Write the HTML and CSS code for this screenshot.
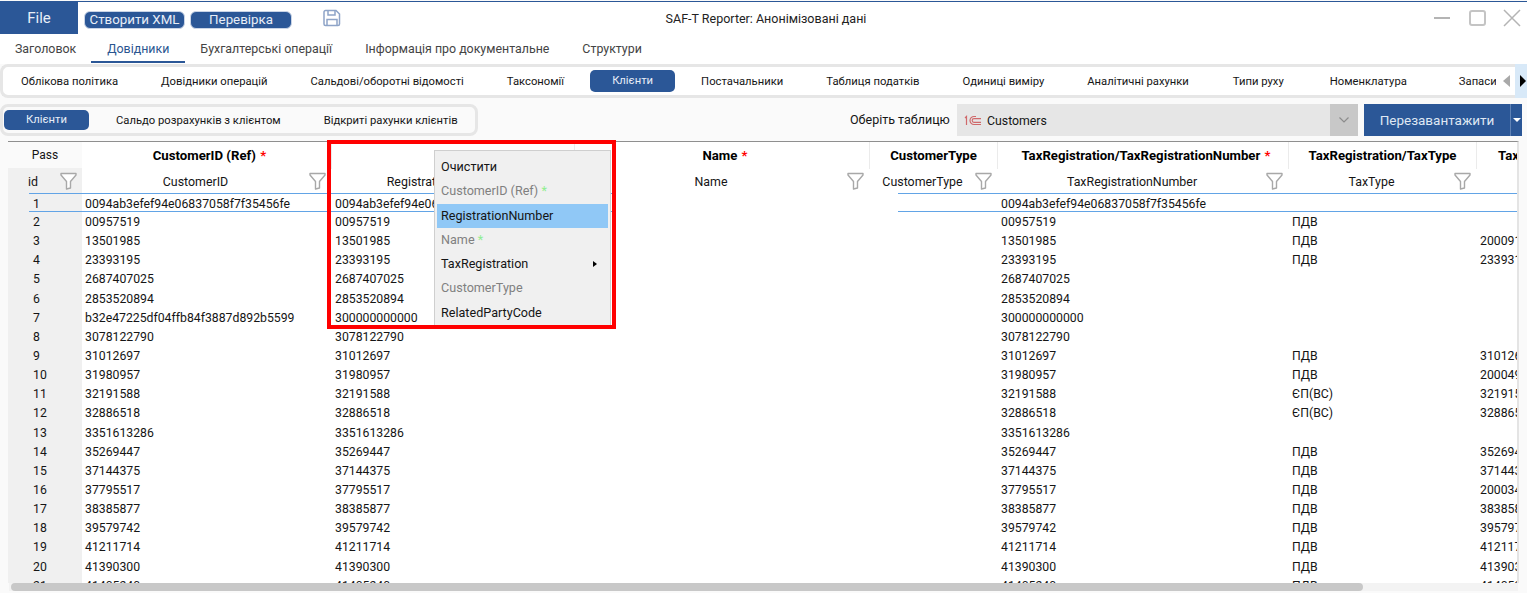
FILE: index.html
```html
<!DOCTYPE html>
<html lang="uk">
<head>
    <meta charset="UTF-8">
    <meta name="viewport" content="width=device-width, initial-scale=1.0">
    <title>SAF-T Reporter</title>
    <link rel="stylesheet" href="styles.css">
</head>
<body>
    <svg class="svg-defs" width="0" height="0">
        <symbol id="funnel" viewBox="0 0 17 18">
            <path d="M1 1.500h15v1.500L10.500 9.500V16L6.500 17V9.500L1 3z" fill="#fff" stroke="#a8a8a8" stroke-width="1.400" stroke-linejoin="round"/>
        </symbol>
    </svg>

    <div class="app">
        <header class="titlebar">
            <div class="titlebar-left">
                <button class="file-btn">File</button>
                <button class="pill-btn pill-xml">Створити XML</button>
                <button class="pill-btn pill-check">Перевірка</button>
                <svg class="save-icon" width="18" height="18" viewBox="0 0 18 18" fill="none" stroke="#8ea4c8" stroke-width="1.500">
                    <path d="M2.500 1.500h10.500l3.500 3.500v10a1.500 1.500 0 0 1-1.500 1.500H2.500a1.500 1.500 0 0 1-1.500-1.500V3a1.500 1.500 0 0 1 1.500-1.500z"/>
                    <path d="M5 1.500v4.500h7V1.500M4 16.500v-6h10v6"/>
                </svg>
            </div>
            <div class="title">SAF-T Reporter: Анонімізовані дані</div>
            <div class="win-controls">
                <span class="win-min"></span>
                <span class="win-max"></span>
                <svg class="win-close" width="20" height="20" viewBox="0 0 20 20" stroke="#b4b4b4" stroke-width="1.500">
                    <path d="M2 2l16 16M18 2L2 18"/>
                </svg>
            </div>
        </header>

        <nav class="main-tabs">
            <a class="main-tab">Заголовок</a>
            <a class="main-tab active">Довідники</a>
            <a class="main-tab">Бухгалтерські операції</a>
            <a class="main-tab">Інформація про документальне</a>
            <a class="main-tab">Структури</a>
        </nav>

        <div class="sub-tabs">
            <div class="sub-tabs-list">
                <a class="sub-tab">Облікова політика</a>
                <a class="sub-tab">Довідники операцій</a>
                <a class="sub-tab">Сальдові/оборотні відомості</a>
                <a class="sub-tab">Таксономії</a>
                <a class="sub-tab active">Клієнти</a>
                <a class="sub-tab">Постачальники</a>
                <a class="sub-tab">Таблиця податків</a>
                <a class="sub-tab">Одиниці виміру</a>
                <a class="sub-tab">Аналітичні рахунки</a>
                <a class="sub-tab tab-moves">Типи руху</a>
                <a class="sub-tab tab-items">Номенклатура</a>
                <a class="sub-tab tab-stock">Запаси</a>
            </div>
            <span class="arrow-left"></span>
            <span class="arrow-right-box"><span class="arrow-right"></span></span>
        </div>

        <div class="toolbar">
            <div class="toggle-group">
                <a class="toggle active">Клієнти</a>
                <a class="toggle">Сальдо розрахунків з клієнтом</a>
                <a class="toggle">Відкриті рахунки клієнтів</a>
            </div>
            <label class="table-label">Оберіть таблицю</label>
            <div class="combo">
                <svg class="combo-icon" width="18" height="11" viewBox="0 0 18 11" fill="none" stroke="#d0696b" stroke-width="1.200">
                    <path d="M1 3l1.500-1.500V10"/>
                    <path d="M17 9.500H10a4 4 0 0 1 0-8h2M17 7.300h-7a1.800 1.800 0 0 1 0-3.600h7"/>
                </svg>
                <span class="combo-text">Customers</span>
                <span class="combo-arrow">
                    <svg width="10" height="6" viewBox="0 0 10 6" fill="none" stroke="#8c8c8c" stroke-width="1.200"><path d="M.5.500L5 5 9.500.500"/></svg>
                </span>
            </div>
            <div class="reload">
                <span class="reload-text">Перезавантажити</span>
                <span class="reload-drop"><span class="tri-down"></span></span>
            </div>
        </div>

        <div class="grid-wrap">
            <div class="grid-row head-top">
                <div class="pass">Pass</div>
                <div class="h-cell h-req">CustomerID (Ref) <i>*</i></div>
                <div class="h-cell"></div>
                <div class="h-cell h-req">Name <i>*</i></div>
                <div class="h-cell">CustomerType</div>
                <div class="h-cell h-req">TaxRegistration/TaxRegistrationNumber <i>*</i></div>
                <div class="h-cell">TaxRegistration/TaxType</div>
                <div class="h-cell h-last">TaxRegistration/TaxNumber</div>
            </div>
            <div class="grid-row head-sub">
                <div class="sub-id"><span>id</span><svg class="funnel"><use href="#funnel"/></svg></div>
                <div class="sub-cell"><span>CustomerID</span><svg class="funnel"><use href="#funnel"/></svg></div>
                <div class="sub-cell"><span>RegistrationNumber</span><svg class="funnel"><use href="#funnel"/></svg></div>
                <div class="sub-cell"><span>Name</span><svg class="funnel"><use href="#funnel"/></svg></div>
                <div class="sub-cell"><span>CustomerType</span><svg class="funnel"><use href="#funnel"/></svg></div>
                <div class="sub-cell"><span>TaxRegistrationNumber</span><svg class="funnel"><use href="#funnel"/></svg></div>
                <div class="sub-cell"><span>TaxType</span><svg class="funnel"><use href="#funnel"/></svg></div>
                <div class="sub-cell"></div>
            </div>

            <div class="rows">
                <div class="grid-row row row-first"><div class="id">1</div><div>0094ab3efef94e06837058f7f35456fe</div><div class="reg">0094ab3efef94e06837058f7f35456fe</div><div></div><div></div><div>0094ab3efef94e06837058f7f35456fe</div><div></div><div></div></div>
                <div class="grid-row row"><div class="id">2</div><div>00957519</div><div class="reg">00957519</div><div></div><div></div><div>00957519</div><div>ПДВ</div><div></div></div>
                <div class="grid-row row"><div class="id">3</div><div>13501985</div><div class="reg">13501985</div><div></div><div></div><div>13501985</div><div>ПДВ</div><div>200091985</div></div>
                <div class="grid-row row"><div class="id">4</div><div>23393195</div><div class="reg">23393195</div><div></div><div></div><div>23393195</div><div>ПДВ</div><div>233931950</div></div>
                <div class="grid-row row"><div class="id">5</div><div>2687407025</div><div class="reg">2687407025</div><div></div><div></div><div>2687407025</div><div></div><div></div></div>
                <div class="grid-row row"><div class="id">6</div><div>2853520894</div><div class="reg">2853520894</div><div></div><div></div><div>2853520894</div><div></div><div></div></div>
                <div class="grid-row row"><div class="id">7</div><div>b32e47225df04ffb84f3887d892b5599</div><div class="reg">300000000000</div><div></div><div></div><div>300000000000</div><div></div><div></div></div>
                <div class="grid-row row"><div class="id">8</div><div>3078122790</div><div class="reg">3078122790</div><div></div><div></div><div>3078122790</div><div></div><div></div></div>
                <div class="grid-row row"><div class="id">9</div><div>31012697</div><div class="reg">31012697</div><div></div><div></div><div>31012697</div><div>ПДВ</div><div>310126926</div></div>
                <div class="grid-row row"><div class="id">10</div><div>31980957</div><div class="reg">31980957</div><div></div><div></div><div>31980957</div><div>ПДВ</div><div>200049957</div></div>
                <div class="grid-row row"><div class="id">11</div><div>32191588</div><div class="reg">32191588</div><div></div><div></div><div>32191588</div><div>ЄП(ВС)</div><div>321915880</div></div>
                <div class="grid-row row"><div class="id">12</div><div>32886518</div><div class="reg">32886518</div><div></div><div></div><div>32886518</div><div>ЄП(ВС)</div><div>328865180</div></div>
                <div class="grid-row row"><div class="id">13</div><div>3351613286</div><div class="reg">3351613286</div><div></div><div></div><div>3351613286</div><div></div><div></div></div>
                <div class="grid-row row"><div class="id">14</div><div>35269447</div><div class="reg">35269447</div><div></div><div></div><div>35269447</div><div>ПДВ</div><div>352694470</div></div>
                <div class="grid-row row"><div class="id">15</div><div>37144375</div><div class="reg">37144375</div><div></div><div></div><div>37144375</div><div>ПДВ</div><div>371443750</div></div>
                <div class="grid-row row"><div class="id">16</div><div>37795517</div><div class="reg">37795517</div><div></div><div></div><div>37795517</div><div>ПДВ</div><div>200034517</div></div>
                <div class="grid-row row"><div class="id">17</div><div>38385877</div><div class="reg">38385877</div><div></div><div></div><div>38385877</div><div>ПДВ</div><div>383858770</div></div>
                <div class="grid-row row"><div class="id">18</div><div>39579742</div><div class="reg">39579742</div><div></div><div></div><div>39579742</div><div>ПДВ</div><div>395797420</div></div>
                <div class="grid-row row"><div class="id">19</div><div>41211714</div><div class="reg">41211714</div><div></div><div></div><div>41211714</div><div>ПДВ</div><div>412117140</div></div>
                <div class="grid-row row"><div class="id">20</div><div>41390300</div><div class="reg">41390300</div><div></div><div></div><div>41390300</div><div>ПДВ</div><div>413903000</div></div>
                <div class="grid-row row"><div class="id">21</div><div>41405240</div><div class="reg">41405240</div><div></div><div></div><div>41405240</div><div>ПДВ</div><div>414052400</div></div>
            </div>
        </div>

        <div class="hscroll"><div class="hscroll-thumb"></div></div>

        <div class="ctx-menu">
            <div class="ctx-item">Очистити</div>
            <div class="ctx-item off">CustomerID (Ref) <i>*</i></div>
            <div class="ctx-item hover">RegistrationNumber</div>
            <div class="ctx-item off">Name <i>*</i></div>
            <div class="ctx-item">TaxRegistration<span class="ctx-arrow"></span></div>
            <div class="ctx-item off">CustomerType</div>
            <div class="ctx-item">RelatedPartyCode</div>
        </div>
        <div class="red-box"></div>
    </div>
</body>
</html>
```

FILE: styles.css
```css
:root {
    --blue: #2b5797;
    --line: #e6e6e6;
    --row-h: 19.15px;
}

* {
    margin: 0;
    padding: 0;
    box-sizing: border-box;
}

html, body {
    height: 100%;
    overflow: hidden;
}

body {
    font-family: Roboto, "Noto Sans", sans-serif;
    font-size: 11.25px;
    color: #151515;
    background: #fff;
}

.svg-defs {
    position: absolute;
}

.app {
    position: relative;
    height: 593px;
    display: flex;
    flex-direction: column;
    padding-top: 1px;
    background: #fafafa;
}

/* title bar */
.titlebar {
    height: 33px;
    flex: none;
    display: grid;
    grid-template-columns: 1fr auto 1fr;
    align-items: center;
    background: #fff;
    border-top: 1px solid var(--blue);
}

.titlebar-left {
    display: flex;
    align-items: center;
    height: 100%;
}

.file-btn {
    width: 78px;
    height: 100%;
    border: none;
    background: var(--blue);
    color: #e8eef7;
    font: 15px Roboto, sans-serif;
}

.pill-btn {
    height: 18px;
    border: 1px solid #c9d4e6;
    border-radius: 6px;
    background: var(--blue);
    color: #e8eef7;
    font: 13.3px Roboto, sans-serif;
    margin-top: 3px;
}

.pill-xml {
    width: 101px;
    margin-left: 6px;
}

.pill-check {
    width: 102px;
    margin-left: 5px;
}

.save-icon {
    margin-left: 31px;
}

.title {
    font-size: 12.5px;
    padding-left: 5px;
    color: #222;
}

.win-controls {
    display: flex;
    justify-content: flex-end;
    align-items: center;
    gap: 19px;
    padding-right: 5px;
}

.win-min {
    width: 16px;
    height: 2px;
    background: #b4b4b4;
}

.win-max {
    width: 17px;
    height: 16px;
    border: 2px solid #c4c4c4;
    border-radius: 3px;
}

.win-close {
    margin-left: -3px;
}

/* main tabs */
.main-tabs {
    height: 30px;
    flex: none;
    display: flex;
    background: #fff;
    padding-left: 15px;
}

.main-tab {
    font-size: 12.4px;
    color: #444;
    line-height: 29px;
    margin-right: 33px;
    height: 29px;
    white-space: nowrap;
}

.main-tab.active {
    color: #2a5590;
    margin: 0 15px 0 -18px;
    padding: 0 16px;
    border-bottom: 2px solid #2b5797;
}

/* second level tabs */
.sub-tabs {
    position: relative;
    height: 34px;
    flex: none;
    display: flex;
    align-items: center;
    background: #fff;
    border: 3px solid var(--line);
    border-right: none;
    border-radius: 8px 0 0 8px;
}

.sub-tabs-list {
    width: 1493px;
    flex: none;
    display: flex;
    align-items: center;
    overflow: hidden;
    padding-left: 18px;
    gap: 43px;
}

.sub-tab {
    white-space: nowrap;
    flex: none;
}

.sub-tab.active {
    background: var(--blue);
    color: #e8eef7;
    width: 85px;
    height: 22px;
    line-height: 22px;
    text-align: center;
    border-radius: 5px;
    margin: 0 -17px;
}

.tab-moves {
    margin-left: 1px;
}

.tab-items {
    margin-left: 3px;
}

.tab-stock {
    margin-left: 9px;
}

.arrow-left {
    flex: none;
    margin-left: 7px;
    border: 6px solid transparent;
    border-right: 7px solid #a9a9a9;
    border-left: none;
}

.arrow-right-box {
    margin-left: auto;
    width: 12px;
    align-self: stretch;
    margin-top: -3px;
    margin-bottom: -3px;
    background: #d8e9f8;
    display: flex;
    align-items: center;
    justify-content: flex-end;
    padding-right: 1px;
}

.arrow-right {
    border: 6px solid transparent;
    border-left: 6px solid #000;
    border-right: none;
}

/* toolbar */
.toolbar {
    height: 43px;
    flex: none;
    display: flex;
    align-items: flex-start;
    padding-top: 6px;
}

.toggle-group {
    width: 478px;
    height: 32px;
    flex: none;
    display: flex;
    align-items: center;
    padding-left: 1px;
    background: #fafafa;
    border: 3px solid var(--line);
    border-radius: 8px;
}

.toggle {
    flex: none;
    white-space: nowrap;
    margin-right: 43px;
}

.toggle.active {
    width: 85px;
    height: 20px;
    margin-right: 27px;
    line-height: 20px;
    text-align: center;
    background: var(--blue);
    color: #e8eef7;
    border-radius: 5px;
}

.table-label {
    margin-left: 372px;
    width: 107px;
    flex: none;
    font-size: 12.5px;
    line-height: 32px;
}

.combo {
    width: 401px;
    height: 32px;
    flex: none;
    display: flex;
    align-items: center;
    background: #e6e6e6;
    padding-left: 7px;
}

.combo-icon {
    flex: none;
}

.combo-text {
    font-size: 12.3px;
    margin-left: 5px;
    padding-top: 1px;
    flex: 1;
}

.combo-arrow {
    width: 28px;
    height: 100%;
    background: #c8c8c8;
    display: flex;
    align-items: center;
    justify-content: center;
}

.reload {
    width: 158px;
    height: 32px;
    flex: none;
    margin-left: 6px;
    display: flex;
    background: var(--blue);
    color: #dfe7f3;
}

.reload-text {
    flex: 1;
    font-size: 13.5px;
    line-height: 32px;
    text-align: center;
}

.reload-drop {
    width: 12px;
    display: flex;
    align-items: center;
    justify-content: center;
    border-left: 1px solid #5f82b5;
}

.tri-down {
    border: 4px solid transparent;
    border-top: 4px solid #fff;
    border-bottom: none;
}

/* data grid */
.grid-wrap {
    flex: none;
    width: 1511px;
    height: 442px;
    margin-left: 8px;
    overflow: hidden;
    background: #fff;
    border-top: 1px solid #8f8f8f;
    border-right: 2px solid #e4e4e4;
}

.grid-row {
    display: grid;
    grid-template-columns: 74px 250px 243px 295px 128px 291px 188px 100px;
}

.head-top {
    height: 26px;
    line-height: 27px;
    font-size: 12px;
}

.pass {
    text-align: center;
    background: #fafafa;
}

.h-cell {
    text-align: center;
    font-weight: 700;
    font-size: 13.2px;
    color: #000;
    border-right: 1px solid #ebebeb;
    white-space: nowrap;
    overflow: hidden;
}

.h-req {
    padding-left: 6px;
}

.h-cell i,
.ctx-item i {
    font-style: normal;
}

.h-cell i {
    color: #f00;
    margin-left: 1px;
}

.h-last {
    text-align: left;
    padding-left: 21px;
}

.head-sub {
    height: 25px;
    align-items: stretch;
    font-size: 12.4px;
}

.sub-id {
    background: #f0f0f0;
    display: flex;
    align-items: center;
    padding-left: 20px;
}

.sub-id span,
.sub-cell span {
    padding-top: 2px;
}

.sub-id .funnel {
    margin-left: auto;
    margin-right: 5px;
}

.sub-cell {
    display: flex;
    align-items: center;
    padding-right: 6px;
}

.sub-cell span {
    flex: 1;
    text-align: center;
}

.funnel {
    width: 17px;
    height: 18px;
    flex: none;
}

.row {
    height: var(--row-h);
    line-height: calc(var(--row-h) + 2px);
    font-size: 12.25px;
    white-space: nowrap;
}

.row > div {
    padding-left: 3px;
    overflow: hidden;
}

.row > .id {
    padding-left: 25px;
    background: #f0f0f0;
}

.row-first {
    position: relative;
    height: 19px;
    line-height: 23px;
}

/* blue selection lines of the first row, broken under the name column */
.row-first::after {
    content: "";
    position: absolute;
    inset: 0;
    background:
        linear-gradient(to right, transparent 21px, #62a4e6 21px, #62a4e6 607px, transparent 607px, transparent 890px, #62a4e6 890px) top / 100% 1px no-repeat,
        linear-gradient(to right, transparent 21px, #62a4e6 21px, #62a4e6 607px, transparent 607px, transparent 890px, #62a4e6 890px) bottom / 100% 1px no-repeat;
}

/* scrollbar */
.hscroll {
    flex: none;
    height: 8px;
    margin-left: 9px;
    width: 1509px;
    background: #f3f3f3;
}

.hscroll-thumb {
    width: 1352px;
    height: 8px;
    margin-left: 2px;
    background: #c8c8c8;
    border-radius: 4px;
}

/* context menu and the red mark drawn over the grid */
.ctx-menu {
    position: absolute;
    left: 434px;
    top: 150px;
    width: 177px;
    height: 177px;
    padding: 4px 2px;
    background: #f0f0f0;
    border: 1px solid #cfcfcf;
    font-size: 12.6px;
}

.ctx-item {
    position: relative;
    height: 24.3px;
    line-height: 24px;
    padding-left: 4px;
    color: #151515;
}

.ctx-item.off {
    color: #808080;
}

.ctx-item i {
    color: #90ee90;
}

.ctx-item.hover {
    background: #90c8f6;
}

.ctx-arrow {
    position: absolute;
    right: 11px;
    top: 9px;
    border: 3.5px solid transparent;
    border-left: 4px solid #000;
    border-right: none;
}

.red-box {
    position: absolute;
    left: 327px;
    top: 140px;
    width: 289px;
    height: 189px;
    border: 4px solid #f00;
}
```
